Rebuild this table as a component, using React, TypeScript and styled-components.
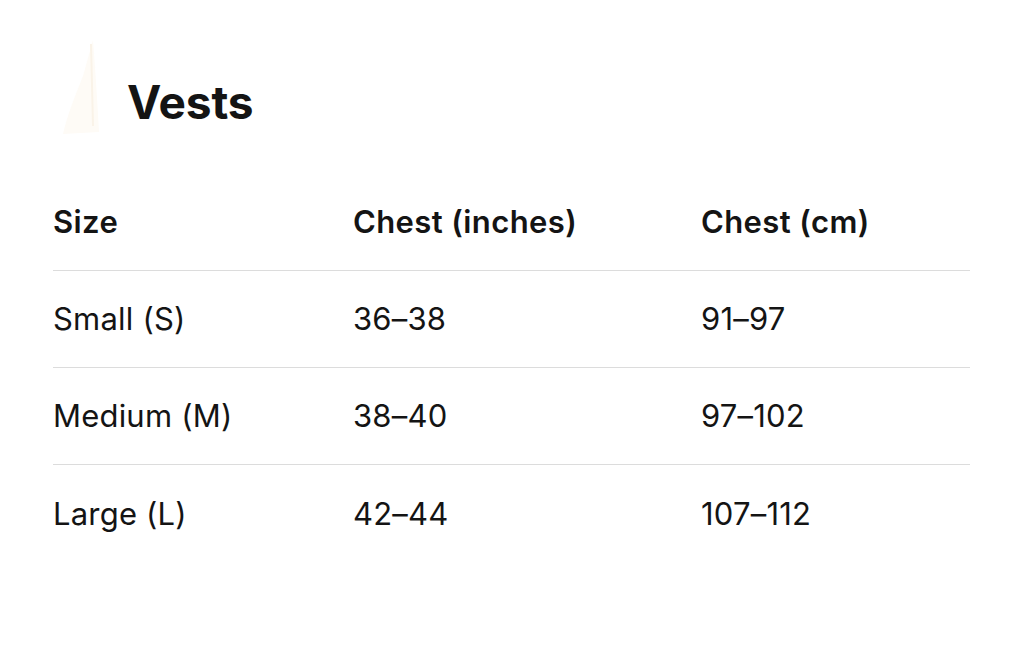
import React from "react";
import styled, { createGlobalStyle } from "styled-components";

const Global = createGlobalStyle`
  html, body { margin: 0; padding: 0; background: #ffffff; }
  body { font-family: Inter, "Noto Sans", sans-serif; color: #141414; }
`;

const Page = styled.div`
  width: 1024px;
  height: 661px;
  box-sizing: border-box;
  padding: 0 54px 0 53px;
  overflow: hidden;
`;

const TitleRow = styled.div`
  height: 174px;
  display: flex;
  align-items: center;
  gap: 12px;
  padding-top: 30px;
  box-sizing: border-box;
`;

const Thumb = styled.div`
  width: 62px;
  height: 104px;
  margin-top: -28px;
  display: flex;
  align-items: center;
  justify-content: center;
`;

const Title = styled.h1`
  margin: 0;
  font-size: 46px;
  font-weight: 700;
  letter-spacing: -0.1px;
  line-height: 1;
  color: #141414;
`;

const Table = styled.div`
  display: grid;
  grid-template-columns: 300px 348px 1fr;
`;

const Row = styled.div<{ $last?: boolean }>`
  display: contents;
  & > div {
    height: 97px;
    border-bottom: ${(p) => (p.$last ? "none" : "1px solid #dcdcdc")};
  }
`;

const Cell = styled.div<{ $head?: boolean }>`
  display: flex;
  align-items: center;
  box-sizing: border-box;
  font-size: 31px;
  font-weight: ${(p) => (p.$head ? 600 : 400)};
  letter-spacing: ${(p) => (p.$head ? "0.4px" : "0.2px")};
  color: #141414;
  padding-bottom: 1px;
`;

const rows = [
  ["Small (S)", "36–38", "91–97"],
  ["Medium (M)", "38–40", "97–102"],
  ["Large (L)", "42–44", "107–112"],
];

export default function App() {
  return (
    <>
      <Global />
      <Page>
        <TitleRow>
          <Thumb>
            <svg width="62" height="104" viewBox="0 0 62 104">
              <path d="M40 4 C42 30 44 60 46 96 L10 98 C14 80 22 60 30 40 Z" fill="#fefbf6" />
              <path d="M38 8 L40 90" stroke="#faf3e8" strokeWidth="2" fill="none" />
            </svg>
          </Thumb>
          <Title>Vests</Title>
        </TitleRow>
        <Table>
          <Row>
            <Cell $head>Size</Cell>
            <Cell $head>Chest (inches)</Cell>
            <Cell $head>Chest (cm)</Cell>
          </Row>
          {rows.map((r, i) => (
            <Row key={r[0]} $last={i === rows.length - 1}>
              {r.map((c) => (
                <Cell key={c}>{c}</Cell>
              ))}
            </Row>
          ))}
        </Table>
      </Page>
    </>
  );
}
